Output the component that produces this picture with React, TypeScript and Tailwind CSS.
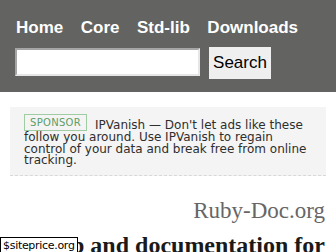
import React from 'react';

const navLinks = ['Home', 'Core', 'Std-lib', 'Downloads'];

export default function App() {
  return (
    <div className="relative h-[252px] w-[336px] overflow-hidden bg-white">
      {/* Header */}
      <header className="h-[92px] bg-[#636361] px-[15px] pt-[18px] font-['Liberation_Sans',Arial,sans-serif]">
        <nav className="flex gap-[17.5px] pl-[1px] text-[17px] font-bold leading-[19px] text-white">
          {navLinks.map((link) => (
            <a key={link} href="#">
              {link}
            </a>
          ))}
        </nav>
        <form className="mt-[10px] flex items-start">
          <input
            type="text"
            className="mt-[1px] h-[28px] w-[185px] border-2 border-t-[#a5a5a5] border-l-[#a5a5a5] border-r-[#e6e6e6] border-b-[#e6e6e6] bg-white outline-none"
          />
          <button
            type="button"
            className="ml-[9px] h-[32px] w-[62px] bg-[#efefef] text-[17px] leading-[20px] text-black"
          >
            Search
          </button>
        </form>
      </header>

      {/* Sponsor */}
      <div className="mx-[10px] mt-[15px] border-b border-dashed border-[#d8d8d8] bg-[#f4f4f4] px-[14px] pb-[8px] pt-[13px] font-['DejaVu_Sans',Verdana,sans-serif] text-[12px] leading-[11.8px] text-[#2e2e2e]">
        <span className="-mb-[3px] -mt-[6px] mr-[8px] inline-block border border-[#9fcca3] px-[5px] text-[10px] leading-[15px] tracking-[0.3px] text-[#5e9d67] align-top">
          SPONSOR
        </span>
        IPVanish — Don't let ads like these follow you around. Use IPVanish to regain control of your data and break free from online tracking.
      </div>

      {/* Title */}
      <div className="mt-[21px] pr-[11px] text-right font-['Liberation_Serif','Times_New_Roman',serif] text-[23px] leading-[28px] text-[#666666]">
        Ruby-Doc.org
      </div>
      <h1 className="ml-[35px] mr-[11px] mt-[6px] whitespace-nowrap text-center font-['Liberation_Serif','Times_New_Roman',serif] text-[24px] font-bold leading-[28px] text-[#1a1a1a]">
        Help and documentation for
      </h1>

      {/* Watermark */}
      <div className="absolute left-0 top-[237px] h-[18px] border border-black bg-white px-[2px] font-['DejaVu_Sans',Verdana,sans-serif] text-[11px] leading-[15px] tracking-[-0.3px] text-black">
        $siteprice.org
      </div>
    </div>
  );
}
